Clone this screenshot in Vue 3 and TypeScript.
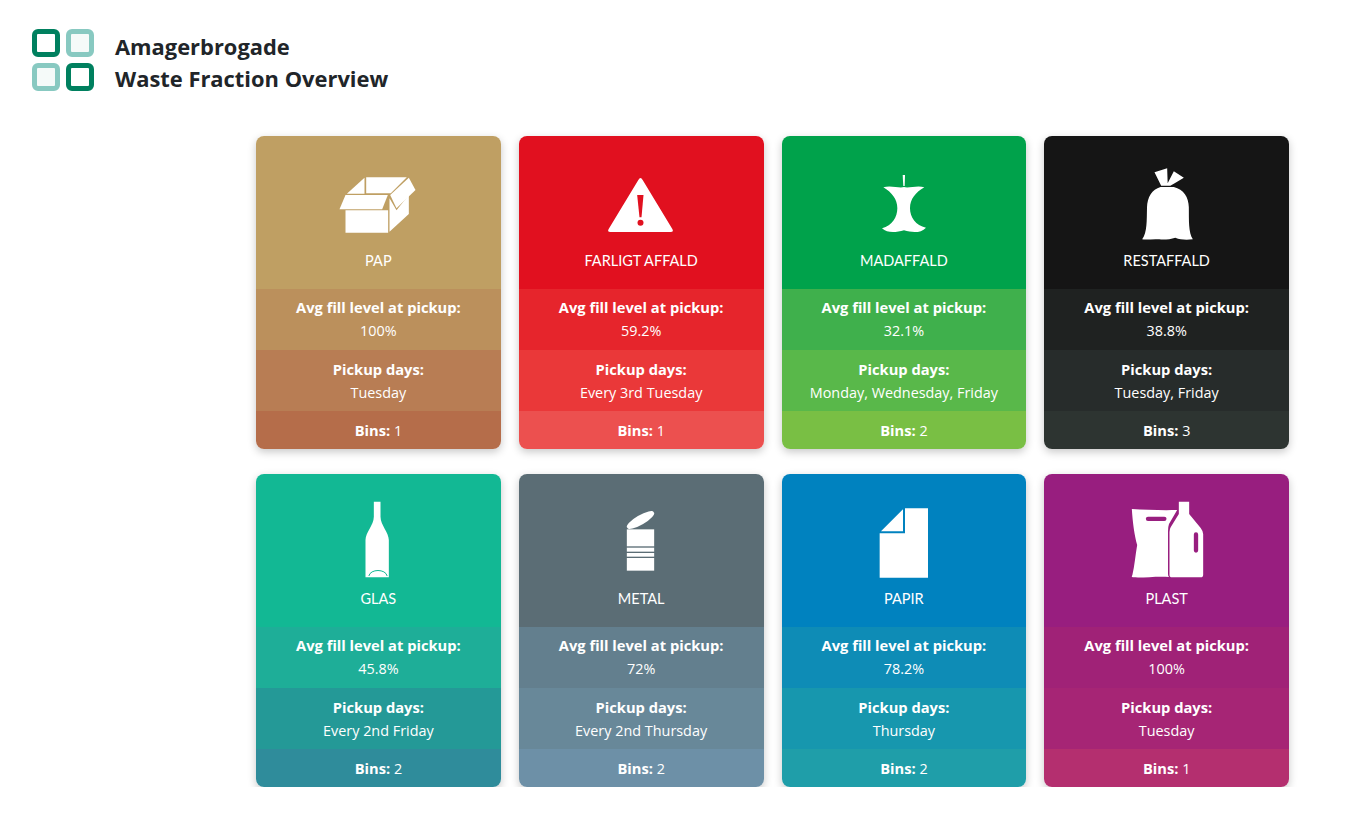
<script setup lang="ts">
interface Shape { d: string; hole?: boolean; line?: boolean }
interface Fraction {
  key: string; name: string; fill: string; days: string; bins: number; shapes: Shape[]
}
const rr = (x: number, y: number, w: number, h: number, r: number) =>
  `M${x + r} ${y}H${x + w - r}A${r} ${r} 0 0 1 ${x + w} ${y + r}V${y + h - r}A${r} ${r} 0 0 1 ${x + w - r} ${y + h}H${x + r}A${r} ${r} 0 0 1 ${x} ${y + h - r}V${y + r}A${r} ${r} 0 0 1 ${x + r} ${y}Z`

const fractions: Fraction[] = [
  { key: 'pap', name: 'PAP', fill: '100%', days: 'Tuesday', bins: 1, shapes: [
    { d: 'M37.5 139H165.5V206H37.5Z' },
    { d: 'M19.5 136L37.5 93H164.5L147.5 136Z' },
    { d: 'M41.5 89L94.5 41V89Z' },
    { d: 'M99.5 40H221.5L173.5 88H99.5Z' },
    { d: 'M227.5 41L247.5 78L190.5 133L171.5 93Z' },
    { d: 'M169.5 203L227.5 150V93L190.5 139L169.5 103Z' },
  ] },
  { key: 'farligt', name: 'FARLIGT AFFALD', fill: '59.2%', days: 'Every 3rd Tuesday', bins: 1, shapes: [
    { d: 'M127 48Q133.5 36 140 48L229 195Q234 204 224 204H43Q33 204 38 195Z' },
    { d: 'M123.5 93H142.5L136.5 160H130.5Z', hole: true },
    { d: 'M124.5 176a9 9 0 1 0 18 0a9 9 0 1 0 -18 0Z', hole: true },
  ] },
  { key: 'mad', name: 'MADAFFALD', fill: '32.1%', days: 'Monday, Wednesday, Friday', bins: 2, shapes: [
    { d: 'M131 33H138L137 66H133Z' },
    { d: 'M73 70C95 62 120 74 135 69C150 74 175 62 196 70C170 85 153 105 153 133C153 160 170 185 201 191C185 208 160 206 135 199C110 206 85 208 69 193C100 185 115 160 115 133C115 105 98 85 73 70Z' },
  ] },
  { key: 'rest', name: 'RESTAFFALD', fill: '38.8%', days: 'Tuesday, Friday', bins: 3, shapes: [
    { d: 'M115.5 69H155.5C185 76 200 100 200.5 130C201 170 199 205 212.5 226C190 228 175 227 160 221C145 226 125 228 112 226C95 224 75 228 60.5 226C76 205 74 170 75 130C76 100 90 76 115.5 69Z' },
    { d: 'M97.5 25L135.5 13L137 58L155.5 22L185.5 41L160.5 56L145 65H117.5Z' },
  ] },
  { key: 'glas', name: 'GLAS', fill: '45.8%', days: 'Every 2nd Friday', bins: 2, shapes: [
    { d: 'M122.5 -1H142.5V44C143 70 167 90 167.5 114V226H97.5V114C98 90 122 70 122.5 44Z' },
    { d: 'M107.5 222C112 200 158 200 162.5 222', line: true },
  ] },
  { key: 'metal', name: 'METAL', fill: '72%', days: 'Every 2nd Thursday', bins: 2, shapes: [
    { d: 'M94 77A46 13 -30 1 1 173 31A46 13 -30 1 1 94 77Z' },
    { d: 'M92.5 82H174.5V133H92.5Z' },
    { d: 'M92.5 137H174.5V149H92.5Z' },
    { d: 'M92.5 153H174.5V164H92.5Z' },
    { d: 'M92.5 168H174.5V206H92.5Z' },
  ] },
  { key: 'papir', name: 'PAPIR', fill: '78.2%', days: 'Thursday', bins: 2, shapes: [
    { d: 'M138 19H207V227H62V94H138Z' },
    { d: 'M132 22V88H66Z' },
  ] },
  { key: 'plast', name: 'PLAST', fill: '100%', days: 'Tuesday', bins: 1, shapes: [
    { d: 'M29.5 21C70 24 125 25 165.5 24L141 66Q138 74 138 88V216Q138 222 141 225C105 222 65 228 33 226C28 226 29 222 31 220C38 190 40 160 45.5 129C37 100 32 60 29.5 21Z' },
    { d: rr(71.5, 44, 62, 13, 6.5), hole: true },
    { d: 'M170.5 -1H201.5V36L236 78Q243.5 88 243.5 96V218Q243.5 226 235.5 226H150.5Q142.5 226 142.5 218V90Q142.5 82 146 76L170.5 36Z' },
    { d: rr(215.5, 91, 13, 61, 6.5), hole: true },
  ] },
]
</script>

<template>
  <div class="page">
    <header class="top">
      <div class="logo">
        <span class="tile dark"></span>
        <span class="tile light"></span>
        <span class="tile light"></span>
        <span class="tile dark"></span>
      </div>
      <h1 class="title">Amagerbrogade<br />Waste Fraction Overview</h1>
    </header>
    <main class="grid">
      <article v-for="f in fractions" :key="f.key" class="card" :class="f.key">
        <div class="hero">
          <svg class="icon" viewBox="0 -12 270 240" width="90" height="80" aria-hidden="true">
            <path
              v-for="(s, i) in f.shapes"
              :key="i"
              :d="s.d"
              :class="{ hole: s.hole, line: s.line }"
            />
          </svg>
          <div class="name">{{ f.name }}</div>
        </div>
        <div class="row r1"><strong>Avg fill level at pickup:</strong><span>{{ f.fill }}</span></div>
        <div class="row r2"><strong>Pickup days:</strong><span>{{ f.days }}</span></div>
        <div class="row r3"><p><strong>Bins:</strong> {{ f.bins }}</p></div>
      </article>
    </main>
  </div>
</template>

<style>
html, body { background: #fff; }
</style>

<style scoped>
.page {
  font-family: "Open Sans", "Noto Sans", sans-serif;
  color: #212529;
}
.top {
  display: flex;
  align-items: flex-start;
  gap: 21px;
  padding: 29px 32px 0;
  height: 62px;
}
.logo {
  display: grid;
  grid-template-columns: 28px 28px;
  grid-template-rows: 28px 28px;
  gap: 6px;
  width: 62px;
}
.tile {
  box-sizing: border-box;
  border-radius: 6px;
  border: 5.5px solid;
  background: #fff;
}
.tile.dark { border-color: #00805f; }
.tile.light { border-color: #88c9c1; background: #f5faf9; }
.title {
  margin: 2px 0 0;
  font-size: 21.9px;
  line-height: 32px;
  font-weight: 700;
}
.grid {
  display: grid;
  grid-template-columns: repeat(4, 1fr);
  column-gap: 18px;
  row-gap: 25px;
  margin: 45px 65px 0 256px;
}
.card {
  border-radius: 8px;
  overflow: hidden;
  box-shadow: 0 3px 8px rgba(0, 0, 0, 0.22);
  color: #fff;
  font-size: 14.4px;
  line-height: 23px;
  text-align: center;
}
.hero {
  height: 153px;
  box-sizing: border-box;
  padding-top: 24px;
  display: flex;
  flex-direction: column;
  align-items: center;
  background: var(--hero);
}
.icon { display: block; flex: none; }
.icon path { fill: #fff; }
.icon path.hole { fill: var(--hero); }
.icon path.line { fill: none; stroke: var(--hero); stroke-width: 3; }
.name {
  font-family: Lato, "Open Sans", sans-serif;
  font-size: 14.5px;
  line-height: 20px;
  margin-top: 11px;
}
.row {
  padding: 7.5px 8px;
  display: flex;
  flex-direction: column;
}
.row p { margin: 0; }
.row strong { font-weight: 700; font-size: 14.7px; }
.r1 { background: var(--a); padding: 7px 8px 8px; }
.r2 { background: var(--b); }
.r3 { background: var(--c); }

.pap { --hero: #bf9f63; --a: #bb905c; --b: #b87d54; --c: #b56d4a; }
.farligt { --hero: #e1101f; --a: #e6252c; --b: #ea3839; --c: #ec504f; }
.mad { --hero: #00a24b; --a: #3fb04c; --b: #59b84a; --c: #79bf44; }
.rest { --hero: #151515; --a: #1f2221; --b: #272c2b; --c: #2d3431; }
.glas { --hero: #12b894; --a: #1eae98; --b: #249997; --c: #2f8c9b; }
.metal { --hero: #5b6d75; --a: #637f8e; --b: #688899; --c: #6d90a7; }
.papir { --hero: #0082bf; --a: #0e8cb6; --b: #1797ae; --c: #1f9ea9; }
.plast { --hero: #981e7f; --a: #a02277; --b: #a62575; --c: #b42f6f; }
</style>
